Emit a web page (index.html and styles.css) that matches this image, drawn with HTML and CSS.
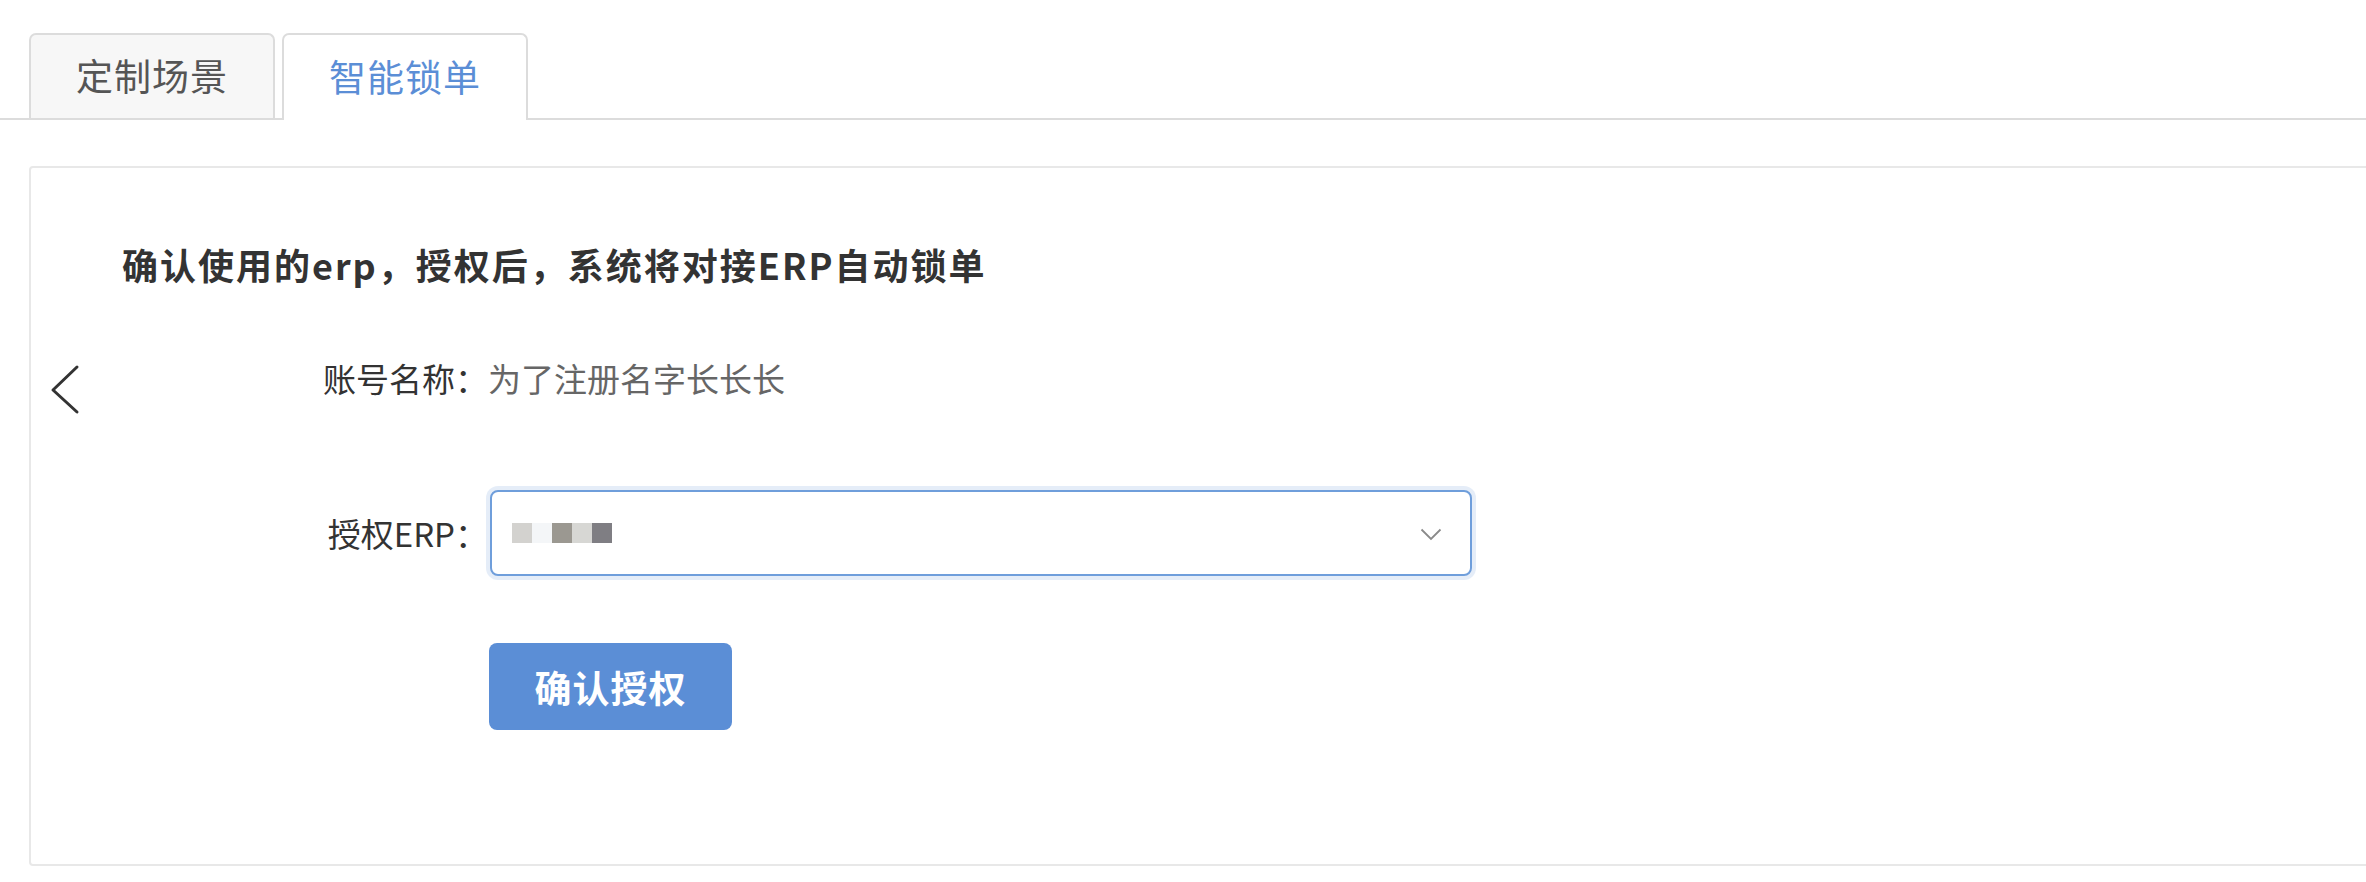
FILE: index.html
```html
<!DOCTYPE html>
<html lang="zh-CN">
<head>
<meta charset="utf-8">
<title>智能锁单</title>
<link rel="stylesheet" href="styles.css">
</head>
<body>
  <div class="tabs">
    <div class="tab">定制场景</div>
    <div class="tab tab-active">智能锁单</div>
  </div>
  <div class="card">
    <svg class="prev-arrow" width="40" height="60" viewBox="0 0 40 60"><polyline points="32,7 8,30 32,52" fill="none" stroke="#333" stroke-width="3" stroke-linecap="round" stroke-linejoin="round"/></svg>
    <h2 class="title">确认使用的erp，授权后，系统将对接ERP自动锁单</h2>
    <div class="form">
      <div class="label">账号名称：</div>
      <div class="value">为了注册名字长长长</div>
      <div class="label">授权ERP：</div>
      <div class="select">
        <div class="mosaic">
          <span class="px px1"></span><span class="px px2"></span><span class="px px3"></span><span class="px px4"></span><span class="px px5"></span>
        </div>
        <svg class="caret" width="22" height="13" viewBox="0 0 22 13"><polyline points="1.5,1.5 11,11 20.5,1.5" fill="none" stroke="#8a8a8a" stroke-width="1.8"/></svg>
      </div>
      <div class="label"></div>
      <div class="actions"><button class="btn">确认授权</button></div>
    </div>
  </div>
</body>
</html>
```

FILE: styles.css
```css
html, body {
  margin: 0;
  padding: 0;
  background: #fff;
  overflow: hidden;
}
body {
  font-family: "Noto Sans CJK SC", "Noto Sans", sans-serif;
  color: #333;
}
.tabs {
  display: flex;
  gap: 7px;
  padding: 33px 0 0 29px;
  border-bottom: 2px solid #dcdcdc;
  height: 85px;
}
.tab {
  width: 246px;
  box-sizing: border-box;
  height: 85px;
  border: 2px solid #dcdcdc;
  border-bottom: none;
  border-radius: 7px 7px 0 0;
  background: #f7f7f7;
  color: #555;
  font-size: 37px;
  letter-spacing: 1px;
  display: flex;
  align-items: center;
  justify-content: center;
  padding-bottom: 4px;
}
.tab-active {
  background: #fff;
  color: #5b8ed6;
  height: 87px;
  margin-bottom: -2px;
}
.card {
  position: relative;
  margin: 46px -40px 0 29px;
  height: 700px;
  box-sizing: border-box;
  border: 2px solid #e8e8e8;
  border-radius: 4px;
  padding: 71px 0 0 91px;
}
.prev-arrow {
  position: absolute;
  left: 14px;
  top: 192px;
}
.title {
  margin: 0;
  font-size: 36px;
  line-height: 50px;
  font-weight: bold;
  letter-spacing: 2px;
  color: #333;
}
.form {
  display: grid;
  grid-template-columns: 366px auto;
  grid-template-rows: 50px 173px 154px;
  margin-top: 64px;
  align-items: end;
  font-size: 33px;
}
.label {
  text-align: right;
  color: #333;
  line-height: 50px;
}
.value {
  color: #666;
  line-height: 50px;
}
.form .label:nth-of-type(3) {
  margin-bottom: 18px;
}
.select {
  box-sizing: border-box;
  width: 982px;
  height: 86px;
  margin-left: 2px;
  border: 2px solid #6f9edb;
  border-radius: 8px;
  box-shadow: 0 0 0 4px rgba(92, 142, 214, 0.16);
  display: flex;
  align-items: center;
  justify-content: space-between;
  padding: 0 28px 0 20px;
  background: #fff;
}
.mosaic {
  display: flex;
}
.px {
  width: 20px;
  height: 20px;
  display: block;
}
.px1 { background: #d3d2cf; }
.px2 { background: #f4f6f8; }
.px3 { background: #9b9891; }
.px4 { background: #d7d7d4; }
.px5 { background: #7f7e83; }
.caret {
  display: block;
  margin-top: 2px;
}
.actions {
  display: flex;
}
.btn {
  width: 243px;
  height: 87px;
  margin-left: 1px;
  border: none;
  border-radius: 8px;
  background: #5b8ed6;
  color: #fff;
  font-family: "Noto Sans CJK SC", sans-serif;
  font-size: 37px;
  font-weight: bold;
  letter-spacing: 1px;
  padding: 0;
}
```
